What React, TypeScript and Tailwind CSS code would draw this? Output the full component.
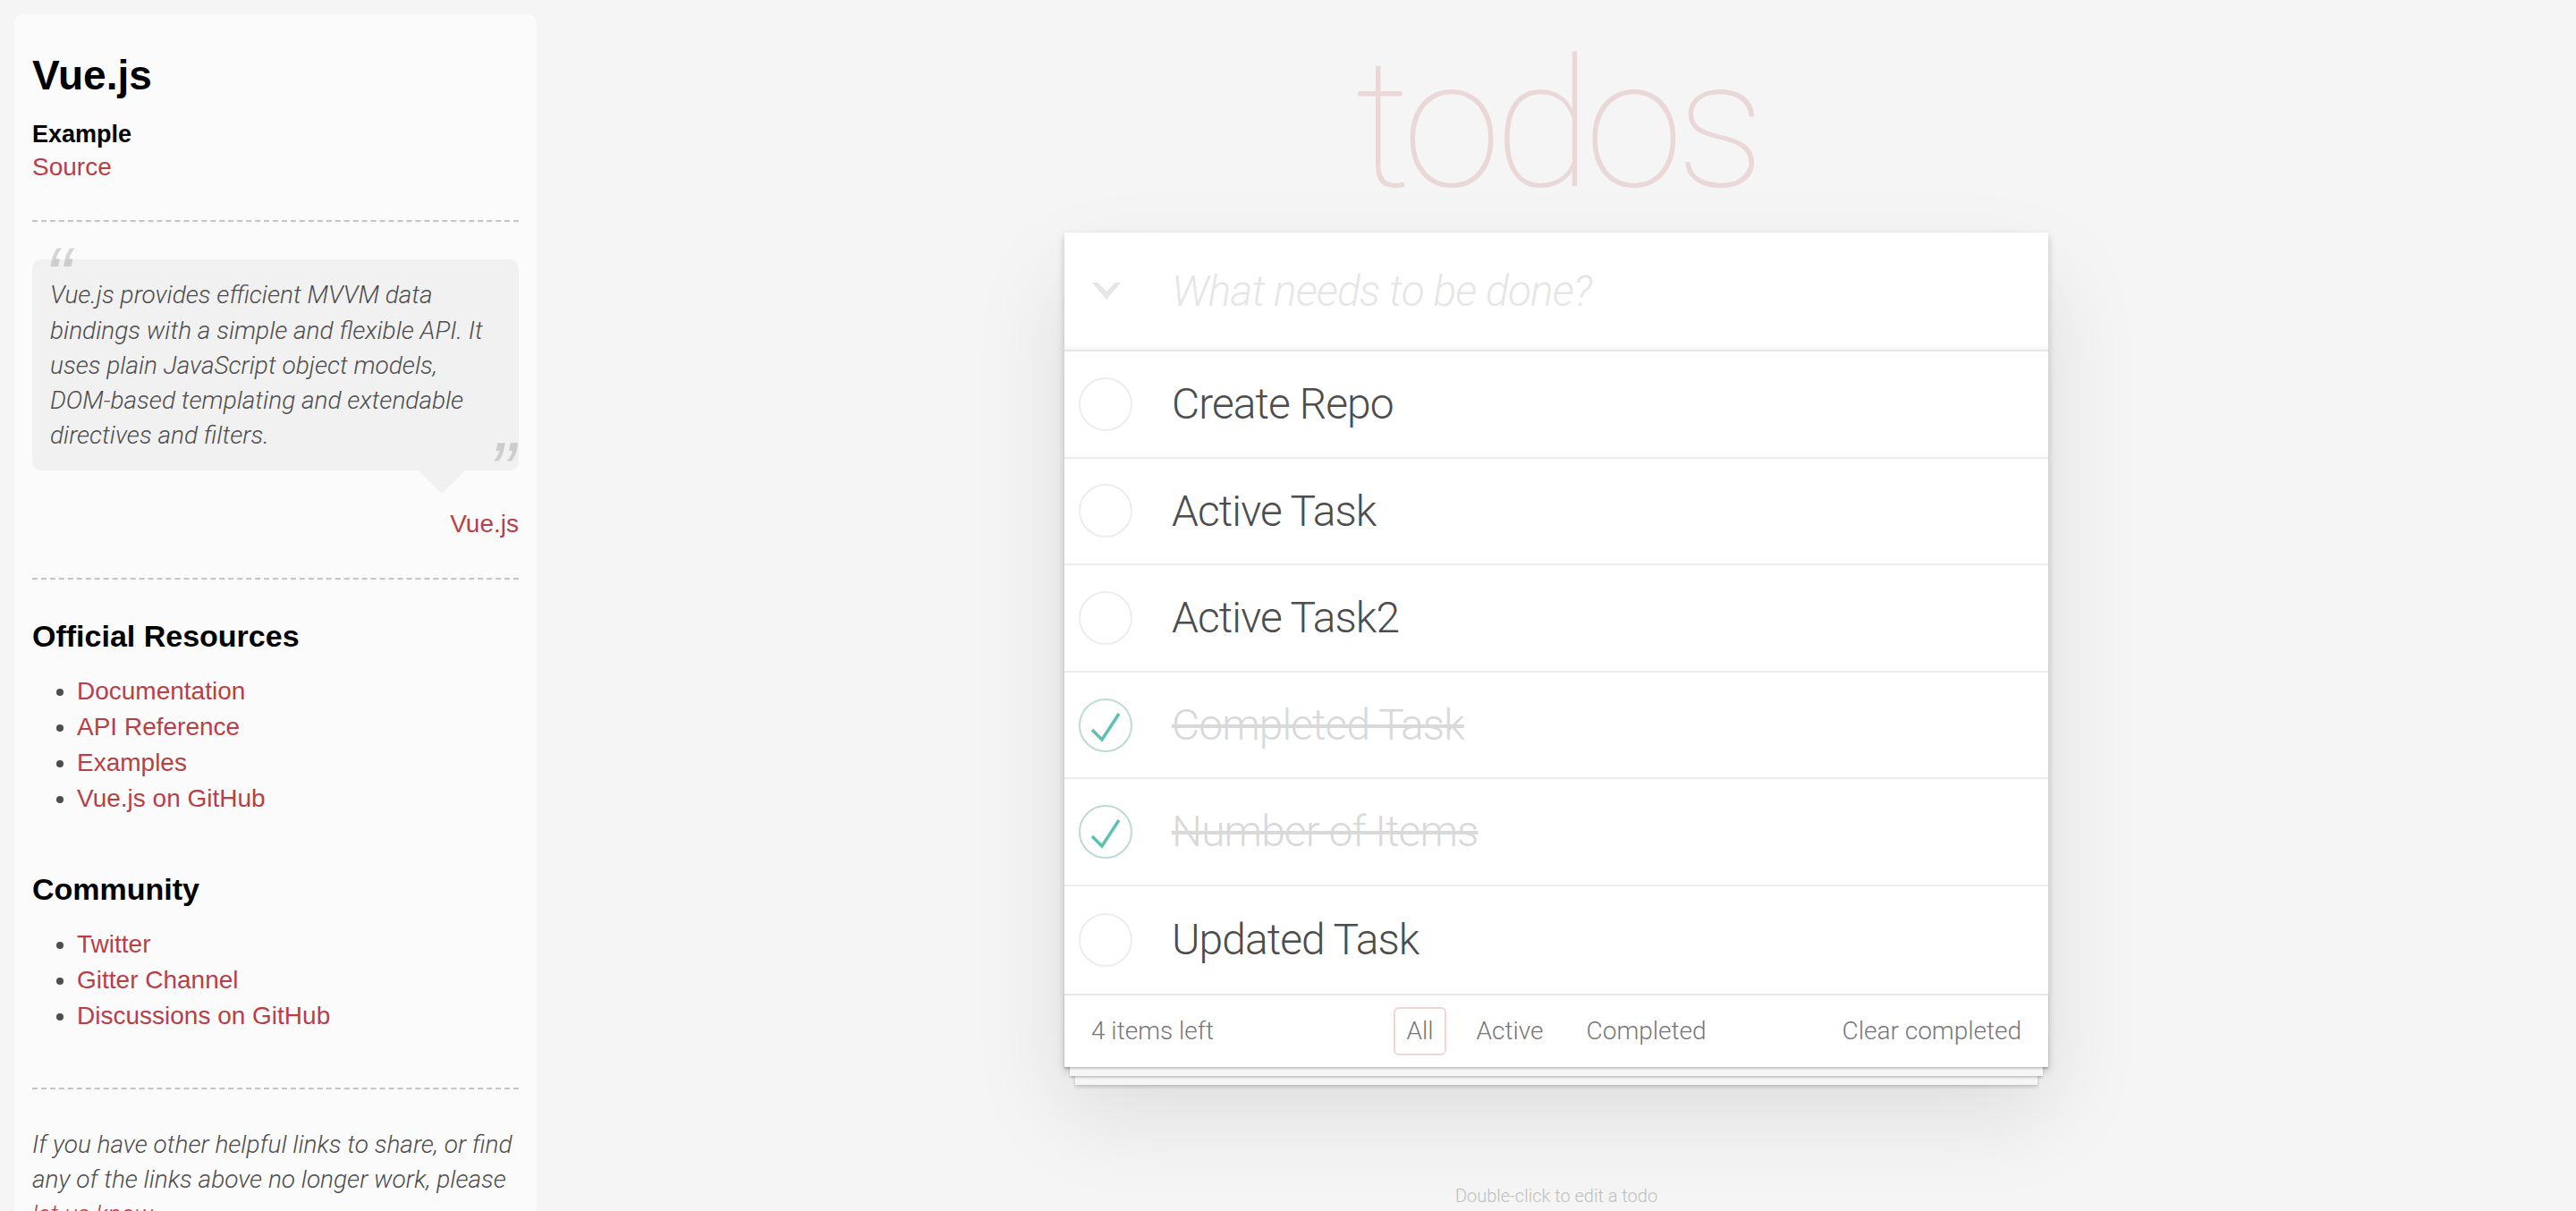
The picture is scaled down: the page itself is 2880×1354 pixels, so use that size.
import React from 'react';

const todos = [
  { title: 'Create Repo', done: false },
  { title: 'Active Task', done: false },
  { title: 'Active Task2', done: false },
  { title: 'Completed Task', done: true },
  { title: 'Number of Items', done: true },
  { title: 'Updated Task', done: false },
];

const official = ['Documentation', 'API Reference', 'Examples', 'Vue.js on GitHub'];
const community = ['Twitter', 'Gitter Channel', 'Discussions on GitHub'];

const Rule = () => (
  <div className="my-10 h-0 border-t-2 border-b-2 border-dashed border-t-[#c5c5c5] border-b-[#f7f7f7]" />
);

const Check = ({ done }: { done: boolean }) => (
  <svg width="60" height="60" viewBox="0 0 60 60" className="shrink-0">
    <circle cx="30" cy="30" r="29" fill="none" stroke={done ? '#bddad5' : '#ededed'} strokeWidth="2" />
    {done && (
      <polyline points="15,35 26,46 45,17" fill="none" stroke="#5dc2af" strokeWidth="3.5" />
    )}
  </svg>
);

const Sidebar = () => (
  <aside className="w-[600px] shrink-0 pl-4 pt-4">
    <div className="w-[584px] rounded-[10px] bg-[#fbfbfb] p-5 font-['Liberation_Sans',Arial,sans-serif] text-[28px] text-[#4d4d4d]">
      <h3 className="my-5 text-[46px] leading-[57.6px] font-bold text-black">Vue.js</h3>
      <h5 className="mt-5 text-[27px] leading-[33.6px] font-bold text-black">Example</h5>
      <a className="block leading-[39.2px] text-[#b83f45]">Source</a>
      <Rule />

      {/* quote */}
      <div className="relative rounded-[10px] bg-[#f1f1f1] p-5">
        <span className="absolute left-[14px] top-[-26px] font-['Liberation_Sans',sans-serif] text-[90px] leading-none italic text-black/15">“</span>
        <p className="font-['Roboto',sans-serif] font-light italic leading-[39.2px]">
          Vue.js provides efficient MVVM data bindings with a simple and flexible API. It uses plain JavaScript object
          models, DOM-based templating and extendable directives and filters.
        </p>
        <span className="absolute right-[4px] bottom-[-46px] font-['Liberation_Sans',sans-serif] text-[90px] leading-none italic text-black/15">”</span>
        <div className="absolute right-[60px] top-full h-0 w-0 border-x-[26px] border-t-[26px] border-x-transparent border-t-[#f1f1f1]" />
      </div>
      <div className="mt-10 text-right leading-[39.2px]">
        <a className="text-[#b83f45]">Vue.js</a>
      </div>
      <Rule />

      <h4 className="my-5 text-[34px] leading-[43.2px] font-bold text-black">Official Resources</h4>
      <ul className="mb-[60px] ml-[50px] list-disc">
        {official.map((l) => (
          <li key={l} className="leading-[40px]">
            <a className="text-[#b83f45]">{l}</a>
          </li>
        ))}
      </ul>
      <h4 className="my-5 text-[34px] leading-[43.2px] font-bold text-black">Community</h4>
      <ul className="mb-[60px] ml-[50px] list-disc">
        {community.map((l) => (
          <li key={l} className="leading-[40px]">
            <a className="text-[#b83f45]">{l}</a>
          </li>
        ))}
      </ul>
      <Rule />
      <p className="font-['Roboto',sans-serif] font-light italic leading-[39.2px]">
        If you have other helpful links to share, or find any of the links above no longer work, please{' '}
        <a className="text-[#b83f45]">let us know</a>.
      </p>
    </div>
  </aside>
);

export default function App() {
  return (
    <div className="flex h-[1354px] overflow-hidden bg-[#f5f5f5] font-['Roboto',sans-serif] font-light text-[#4d4d4d]">
      <Sidebar />

      <main className="flex flex-1 flex-col items-center">
        <h1 className="mt-[40px] h-[200px] text-[200px] leading-[200px] font-thin tracking-[-0.04em] text-[rgba(175,47,47,0.15)]">
          todos
        </h1>

        <section className="relative mt-[20px] w-[1100px] bg-white shadow-[0_4px_8px_0_rgba(0,0,0,0.2),0_50px_100px_0_rgba(0,0,0,0.1)]">
          <header className="flex h-[131px] items-center shadow-[inset_0_-4px_2px_rgba(0,0,0,0.03)]">
            <div className="flex w-[120px] justify-center pr-[26px]">
              <svg width="32" height="20" viewBox="0 0 32 20">
                <polygon points="0,0 6.5,0 16,10 25.5,0 32,0 16,19" fill="#e6e6e6" />
              </svg>
            </div>
            <span className="text-[48px] italic font-light tracking-[-0.02em] text-[#e6e6e6]">What needs to be done?</span>
          </header>

          <ul className="border-t-2 border-[#e6e6e6]">
            {todos.map((t, i) => (
              <li
                key={t.title}
                className={`flex h-[119.6px] items-center ${i < todos.length - 1 ? 'border-b-2 border-[#ededed]' : ''}`}
              >
                <div className="flex w-[120px] pl-[16px]">
                  <Check done={t.done} />
                </div>
                <span
                  className={`text-[48px] font-light leading-[57.6px] tracking-[-0.02em] ${
                    t.done ? 'text-[#d9d9d9] line-through decoration-[#d9d9d9]' : 'text-[#4d4d4d]'
                  }`}
                >
                  {t.title}
                </span>
              </li>
            ))}
          </ul>

          <footer className="relative flex h-[82px] items-center border-t-2 border-[#e6e6e6] bg-white px-[30px] text-[28px] text-[#777] shadow-[0_2px_2px_rgba(0,0,0,0.2),0_16px_0_-6px_#f6f6f6,0_18px_2px_-6px_rgba(0,0,0,0.2),0_32px_0_-12px_#f6f6f6,0_34px_4px_-12px_rgba(0,0,0,0.2)]">
            <span className="flex-1">4 items left</span>
            <div className="flex items-center gap-[20px]">
              <a className="rounded-[6px] border-2 border-[rgba(175,47,47,0.2)] px-[12px] py-[4px]">All</a>
              <a className="rounded-[6px] border-2 border-transparent px-[12px] py-[4px]">Active</a>
              <a className="rounded-[6px] border-2 border-transparent px-[12px] py-[4px]">Completed</a>
            </div>
            <span className="flex-1 text-right">Clear completed</span>
          </footer>
        </section>

        <p className="mt-[130px] text-[20px] leading-[28px] text-[#bfbfbf]">Double-click to edit a todo</p>
      </main>
    </div>
  );
}
